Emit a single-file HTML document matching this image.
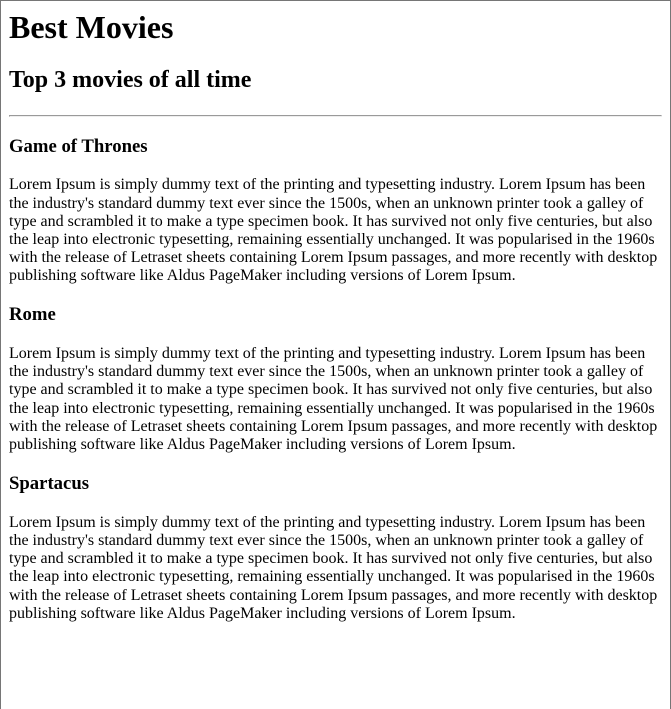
<!DOCTYPE html>
<html><head><meta charset="utf-8"><style>
html{margin:0;padding:0;background:#fff;}
body{margin:0;border:1px solid #767676;border-bottom:none;padding:0 8px 8px 8px;min-height:700px;font-family:"Liberation Serif",serif;font-size:16px;color:#000;}
h1{margin:8px 0 21.44px 0;font-size:32px;}
h2{font-size:24px;margin:20.5px 0;}
hr{margin:8px 0;}
h3{font-size:18.72px;margin:18.72px 0;}
p{margin:16.5px 0 15px 0;line-height:18.2px;}
</style></head><body>
<h1>Best Movies</h1>
<h2>Top 3 movies of all time</h2>
<hr>
<h3>Game of Thrones</h3>
<p>Lorem Ipsum is simply dummy text of the printing and typesetting industry. Lorem Ipsum has been the industry's standard dummy text ever since the 1500s, when an unknown printer took a galley of type and scrambled it to make a type specimen book. It has survived not only five centuries, but also the leap into electronic typesetting, remaining essentially unchanged. It was popularised in the 1960s with the release of Letraset sheets containing Lorem Ipsum passages, and more recently with desktop publishing software like Aldus PageMaker including versions of Lorem Ipsum.</p>
<h3>Rome</h3>
<p>Lorem Ipsum is simply dummy text of the printing and typesetting industry. Lorem Ipsum has been the industry's standard dummy text ever since the 1500s, when an unknown printer took a galley of type and scrambled it to make a type specimen book. It has survived not only five centuries, but also the leap into electronic typesetting, remaining essentially unchanged. It was popularised in the 1960s with the release of Letraset sheets containing Lorem Ipsum passages, and more recently with desktop publishing software like Aldus PageMaker including versions of Lorem Ipsum.</p>
<h3>Spartacus</h3>
<p>Lorem Ipsum is simply dummy text of the printing and typesetting industry. Lorem Ipsum has been the industry's standard dummy text ever since the 1500s, when an unknown printer took a galley of type and scrambled it to make a type specimen book. It has survived not only five centuries, but also the leap into electronic typesetting, remaining essentially unchanged. It was popularised in the 1960s with the release of Letraset sheets containing Lorem Ipsum passages, and more recently with desktop publishing software like Aldus PageMaker including versions of Lorem Ipsum.</p>
</body></html>
